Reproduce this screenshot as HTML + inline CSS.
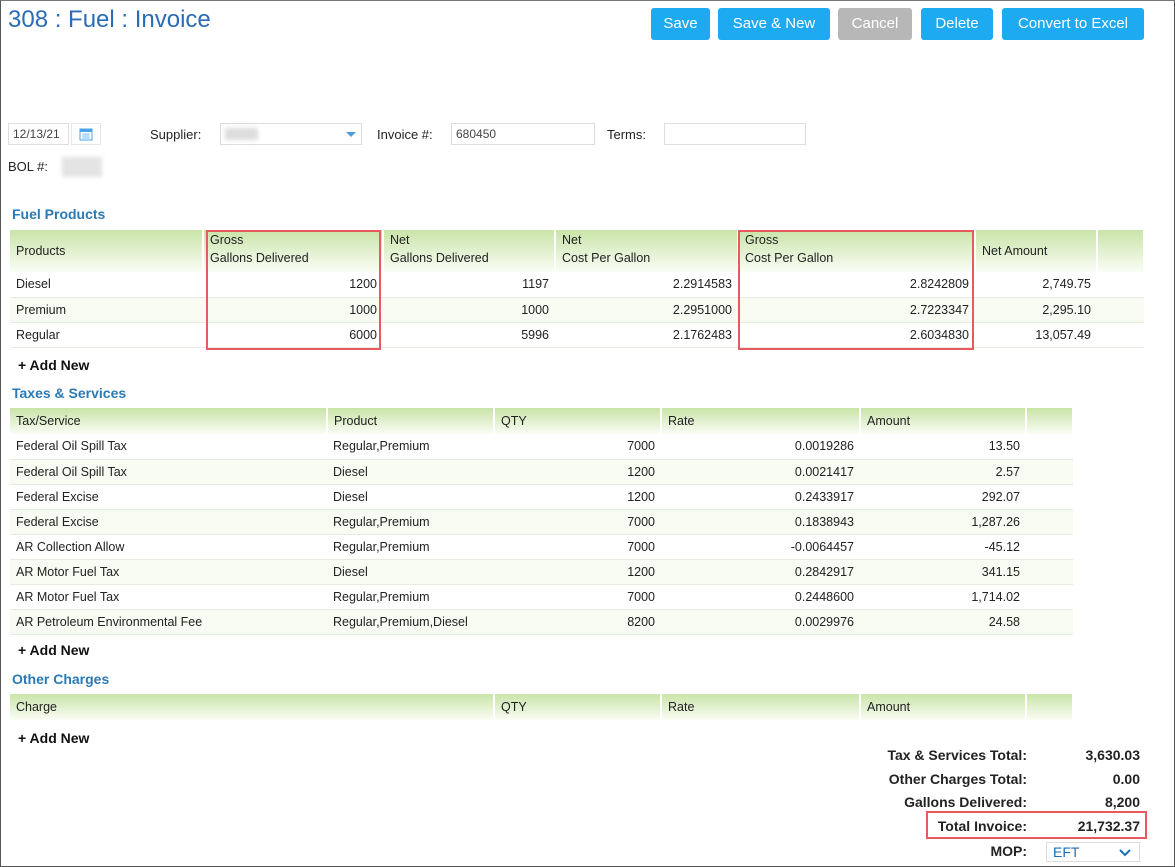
<!DOCTYPE html>
<html><head><style>
*{box-sizing:border-box;margin:0;padding:0}
body{width:1175px;height:867px;position:relative;background:#fff;font-family:"Liberation Sans",Arial,sans-serif;font-size:12.5px;color:#222;overflow:hidden}
.frame{position:absolute;left:0;top:0;width:1175px;height:867px;border:1px solid #555;border-top-color:#777}
.a{position:absolute;white-space:nowrap}
.title{left:8px;top:6px;font-size:24px;color:#2a6db5}
.btn{position:absolute;top:8px;height:32px;background:#1eaaf1;color:#fff;font-size:15px;border-radius:3px;text-align:center;line-height:32px}
.inp{position:absolute;height:22px;border:1px solid #ddd;background:#fff;font-size:12px;color:#444;padding-left:4px;line-height:20px}
.h{font-weight:bold;color:#2a7ab5;font-size:14px}
table{position:absolute;border-collapse:collapse;table-layout:fixed}
th{background:linear-gradient(#c9e4a8,#fafdf6);font-weight:normal;text-align:left;padding:0 6px;border-right:2px solid #fff;vertical-align:middle;color:#222;font-size:12.5px}
td{padding:0 6px;height:25px;border-bottom:1px solid #e6ece2;font-size:12.5px}
tr.alt td{background:#f7fbf2}
td.r{text-align:right}
.add{font-weight:bold;font-size:14px;color:#111}
.red{position:absolute;border:2px solid #e85a5f}
.lbl{position:absolute;font-weight:bold;font-size:14px;text-align:right;color:#222}
</style></head><body>
<div class="frame"></div>
<div class="a title">308 : Fuel : Invoice</div>
<div class="btn" style="left:651px;width:59px">Save</div>
<div class="btn" style="left:718px;width:112px">Save &amp; New</div>
<div class="btn" style="left:838px;width:74px;background:#b7b7b7">Cancel</div>
<div class="btn" style="left:921px;width:72px">Delete</div>
<div class="btn" style="left:1002px;width:142px">Convert to Excel</div>

<div class="inp" style="left:8px;top:123px;width:61px">12/13/21</div>
<div class="a" style="left:71px;top:123px;width:30px;height:22px;border:1px solid #e6e6e6"><svg width="14" height="14" style="position:absolute;left:7px;top:3px"><rect x="1" y="2" width="12" height="11" fill="#fff" stroke="#4ba3e8"/><rect x="1" y="2" width="12" height="3" fill="#4ba3e8"/><path d="M3 7h8M3 9h8M3 11h8M5 6v6M7 6v6M9 6v6" stroke="#8cc4f0" stroke-width=".7"/></svg></div>
<div class="a" style="left:150px;top:127px;font-size:13px">Supplier:</div>
<div class="inp" style="left:220px;top:123px;width:142px"><span style="display:inline-block;width:33px;height:12px;background:#ddd;filter:blur(2px);margin-top:4px"></span><span style="position:absolute;right:5px;top:8px;border:5px solid transparent;border-top:5px solid #4a9be0;border-bottom:0"></span></div>
<div class="a" style="left:377px;top:127px;font-size:13px">Invoice #:</div>
<div class="inp" style="left:451px;top:123px;width:144px">680450</div>
<div class="a" style="left:607px;top:127px;font-size:13px">Terms:</div>
<div class="inp" style="left:664px;top:123px;width:142px"></div>
<div class="a" style="left:8px;top:159px;font-size:13px">BOL #:</div>
<div class="a" style="left:62px;top:157px;width:40px;height:20px;background:#e4e4e4;filter:blur(2px)"></div>

<div class="a h" style="left:12px;top:206px">Fuel Products</div>
<table style="left:10px;top:230px;width:1134px">
<colgroup><col style="width:193px"><col style="width:180px"><col style="width:172px"><col style="width:183px"><col style="width:237px"><col style="width:122px"><col style="width:47px"></colgroup>
<tr style="height:42px"><th>Products</th><th>Gross<br><span style="line-height:22px">Gallons Delivered</span></th><th>Net<br><span style="line-height:22px">Gallons Delivered</span></th><th>Net<br><span style="line-height:22px">Cost Per Gallon</span></th><th>Gross<br><span style="line-height:22px">Cost Per Gallon</span></th><th>Net Amount</th><th></th></tr>
<tr><td>Diesel</td><td class="r">1200</td><td class="r">1197</td><td class="r">2.2914583</td><td class="r">2.8242809</td><td class="r">2,749.75</td><td></td></tr>
<tr class="alt"><td>Premium</td><td class="r">1000</td><td class="r">1000</td><td class="r">2.2951000</td><td class="r">2.7223347</td><td class="r">2,295.10</td><td></td></tr>
<tr><td>Regular</td><td class="r">6000</td><td class="r">5996</td><td class="r">2.1762483</td><td class="r">2.6034830</td><td class="r">13,057.49</td><td></td></tr>
</table>
<div class="red" style="left:206px;top:230px;width:175px;height:120px"></div>
<div class="red" style="left:738px;top:230px;width:236px;height:120px"></div>
<div class="a add" style="left:18px;top:357px">+ Add New</div>

<div class="a h" style="left:12px;top:385px">Taxes &amp; Services</div>
<table style="left:10px;top:408px;width:1063px">
<colgroup><col style="width:317px"><col style="width:167px"><col style="width:167px"><col style="width:199px"><col style="width:166px"><col style="width:47px"></colgroup>
<tr style="height:26px"><th>Tax/Service</th><th>Product</th><th>QTY</th><th>Rate</th><th>Amount</th><th></th></tr>
<tr><td>Federal Oil Spill Tax</td><td>Regular,Premium</td><td class="r">7000</td><td class="r">0.0019286</td><td class="r">13.50</td><td></td></tr>
<tr class="alt"><td>Federal Oil Spill Tax</td><td>Diesel</td><td class="r">1200</td><td class="r">0.0021417</td><td class="r">2.57</td><td></td></tr>
<tr><td>Federal Excise</td><td>Diesel</td><td class="r">1200</td><td class="r">0.2433917</td><td class="r">292.07</td><td></td></tr>
<tr class="alt"><td>Federal Excise</td><td>Regular,Premium</td><td class="r">7000</td><td class="r">0.1838943</td><td class="r">1,287.26</td><td></td></tr>
<tr><td>AR Collection Allow</td><td>Regular,Premium</td><td class="r">7000</td><td class="r">-0.0064457</td><td class="r">-45.12</td><td></td></tr>
<tr class="alt"><td>AR Motor Fuel Tax</td><td>Diesel</td><td class="r">1200</td><td class="r">0.2842917</td><td class="r">341.15</td><td></td></tr>
<tr><td>AR Motor Fuel Tax</td><td>Regular,Premium</td><td class="r">7000</td><td class="r">0.2448600</td><td class="r">1,714.02</td><td></td></tr>
<tr class="alt"><td>AR Petroleum Environmental Fee</td><td>Regular,Premium,Diesel</td><td class="r">8200</td><td class="r">0.0029976</td><td class="r">24.58</td><td></td></tr>
</table>
<div class="a add" style="left:18px;top:642px">+ Add New</div>

<div class="a h" style="left:12px;top:671px">Other Charges</div>
<table style="left:10px;top:694px;width:1063px">
<colgroup><col style="width:484px"><col style="width:167px"><col style="width:199px"><col style="width:166px"><col style="width:47px"></colgroup>
<tr style="height:26px"><th>Charge</th><th>QTY</th><th>Rate</th><th>Amount</th><th></th></tr>
</table>
<div class="a add" style="left:18px;top:730px">+ Add New</div>

<div class="lbl" style="right:148px;top:747px">Tax &amp; Services Total:</div><div class="lbl" style="right:35px;top:747px">3,630.03</div>
<div class="lbl" style="right:148px;top:771px">Other Charges Total:</div><div class="lbl" style="right:35px;top:771px">0.00</div>
<div class="lbl" style="right:148px;top:794px">Gallons Delivered:</div><div class="lbl" style="right:35px;top:794px">8,200</div>
<div class="lbl" style="right:148px;top:818px">Total Invoice:</div><div class="lbl" style="right:35px;top:818px">21,732.37</div>
<div class="red" style="left:926px;top:811px;width:221px;height:28px"></div>
<div class="lbl" style="right:148px;top:843px">MOP:</div>
<div class="inp" style="left:1046px;top:842px;width:94px;height:20px;color:#1a6fb5;font-size:14px;line-height:18px;padding-left:6px">EFT<svg width="12" height="8" style="position:absolute;right:8px;top:6px"><path d="M1 1l5 5 5-5" stroke="#1a6fb5" stroke-width="2" fill="none"/></svg></div>
</body></html>
